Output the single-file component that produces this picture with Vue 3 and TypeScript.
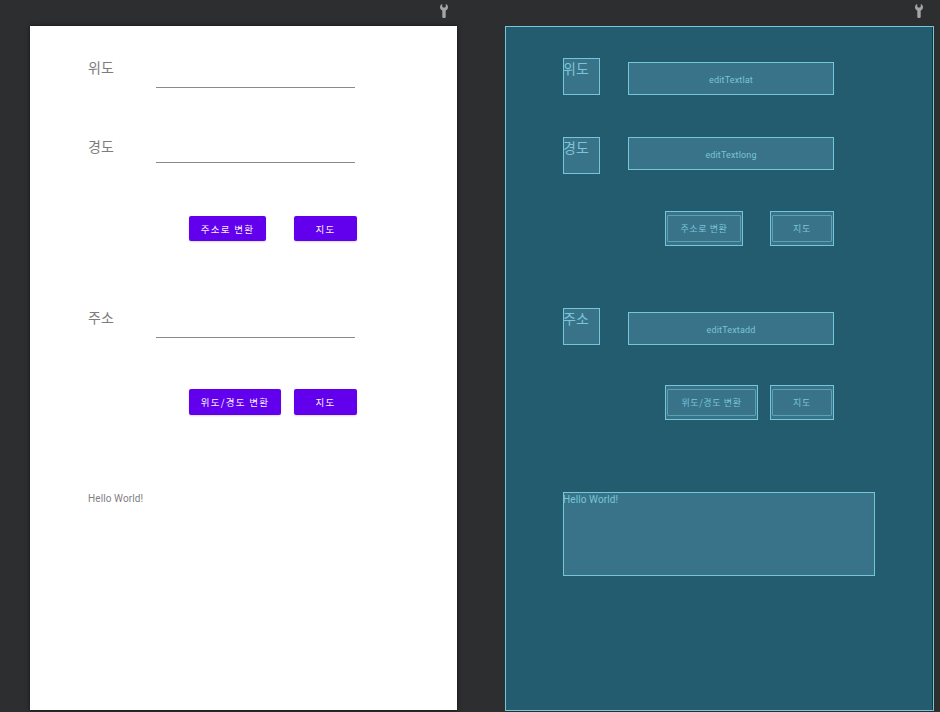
<script setup lang="ts">
const panes = ['design', 'blueprint']

const sections = [
  { label: '위도', field: 'editTextlat', cls: 'row-end' },
  { label: '경도', field: 'editTextlong', cls: 'row-start' },
]
</script>

<template>
  <div class="editor">
    <div v-for="pane in panes" :key="pane" class="pane" :class="pane">
      <div class="toolbar">
        <svg class="wrench" width="8" height="14" viewBox="0 0 8 14">
          <path d="M2.200 0C.7.5 0 1.800 0 3.200c0 1.500.9 2.700 2.300 3.200V13c0 .7.8 1 1.700 1s1.700-.3 1.700-1V6.400C7.100 5.900 8 4.700 8 3.200 8 1.800 7.300.5 5.800 0v2.600L5 3.400H3l-.8-.8z" fill="#a5a5a5" />
        </svg>
      </div>
      <div class="surface">
        <div class="form">
          <div v-for="s in sections" :key="s.field" class="row" :class="s.cls">
            <div class="label">{{ s.label }}</div>
            <div class="edit"><span v-if="pane === 'blueprint'">{{ s.field }}</span></div>
          </div>
          <div class="actions gap-one">
            <button class="btn"><span>주소로 변환</span></button>
            <button class="btn small"><span>지도</span></button>
          </div>
          <div class="row row-end third">
            <div class="label">주소</div>
            <div class="edit"><span v-if="pane === 'blueprint'">editTextadd</span></div>
          </div>
          <div class="actions gap-two">
            <button class="btn wide"><span>위도/경도 변환</span></button>
            <button class="btn small"><span>지도</span></button>
          </div>
          <div class="result">Hello World!</div>
        </div>
      </div>
    </div>
  </div>
</template>

<style>
html,
body {
  margin: 0;
  background: #2d2e30;
  overflow: hidden;
}
</style>

<style scoped>
.editor {
  display: flex;
  width: 940px;
  height: 712px;
  padding-left: 30px;
  gap: 48px;
  box-sizing: border-box;
  background: #2d2e30;
  font-family: Roboto, "Noto Sans CJK KR", sans-serif;
}

.pane {
  width: 427px;
  display: flex;
  flex-direction: column;
}

.pane.blueprint {
  width: 429px;
}

.toolbar {
  height: 26px;
  display: flex;
  justify-content: flex-end;
  padding: 4px 9px 0 0;
  box-sizing: border-box;
}

.blueprint .toolbar {
  padding-right: 11px;
}

.wrench {
  display: block;
}

.surface {
  height: 684px;
  box-sizing: border-box;
  padding: 32px 0 0 58px;
}

.design .surface {
  background: #fff;
  box-shadow: 0 0 4px rgba(0, 0, 0, 0.6);
}

.blueprint .surface {
  height: 685px;
  background: #235c6f;
  outline: 1px solid #76c6d9;
  outline-offset: -1px;
  box-shadow: inset -2px 0 0 #1b3640;
}

.form {
  display: flex;
  flex-direction: column;
  align-items: flex-start;
}

.row {
  display: flex;
  gap: 28px;
  height: 37px;
}

.row + .row {
  margin-top: 42px;
}

.row-end {
  align-items: flex-end;
}

.row-start {
  align-items: flex-start;
}

.third {
  margin-top: 62px;
}

.label {
  width: 37px;
  height: 37px;
  box-sizing: border-box;
  font-size: 14px;
  line-height: 18px;
  font-family: "Noto Sans CJK KR", sans-serif;
  white-space: nowrap;
}

.edit {
  width: 206px;
  height: 33px;
  box-sizing: border-box;
  text-align: center;
  font-size: 9px;
  letter-spacing: 0.15px;
}

.actions {
  width: 271px;
  height: 35px;
  box-sizing: border-box;
  padding-left: 102px;
  display: flex;
  justify-content: space-between;
}

.gap-one {
  margin-top: 37px;
}

.gap-two {
  margin-top: 40px;
}

.btn {
  width: 78px;
  height: 35px;
  padding: 0;
  border: none;
  background: none;
  box-sizing: border-box;
  font-family: "Noto Sans CJK KR", sans-serif;
}

.btn.wide {
  width: 93px;
}

.btn.small {
  width: 64px;
}

.btn span {
  display: flex;
  align-items: center;
  justify-content: center;
  box-sizing: border-box;
  height: 100%;
  white-space: nowrap;
}

.result {
  margin-top: 72px;
  width: 312px;
  height: 84px;
  box-sizing: border-box;
  font-size: 10px;
  line-height: 13px;
  letter-spacing: 0.1px;
}

/* rendered preview */
.design .label {
  color: #7c7c7c;
}

.design .edit {
  padding: 0 4px 0 3px;
}

.design .edit::after {
  content: '';
  display: block;
  height: 1px;
  margin-top: 25px;
  background: #8a8a8a;
}

.design .btn {
  width: 79px;
  padding: 5px 2px 5px 0;
  margin-left: -1px;
  color: #f6f0ff;
  font-size: 9.500px;
  letter-spacing: 1.300px;
}

.design .gap-two .btn {
  padding-top: 4px;
}

.design .btn.wide {
  width: 94px;
}

.design .btn.small {
  width: 65px;
}

.design .btn span {
  background: #6200ee;
  border-radius: 2px;
  box-shadow: 0 1px 2px rgba(0, 0, 0, 0.15);
}

.design .result {
  color: #808080;
}

/* blueprint overlay */
.blueprint .label,
.blueprint .edit,
.blueprint .btn,
.blueprint .result {
  background: #38738a;
  border: 1px solid #76c6d9;
  color: #7cc4d6;
}

.blueprint .label,
.blueprint .result {
  text-indent: -1px;
}

.blueprint .edit {
  line-height: 33px;
  padding-top: 1px;
}

.blueprint .btn {
  padding: 3px 1px;
  font-size: 9px;
  letter-spacing: 0.6px;
}

.blueprint .btn span {
  border: 1px solid #5ba0b3;
  border-radius: 1px;
}
</style>
